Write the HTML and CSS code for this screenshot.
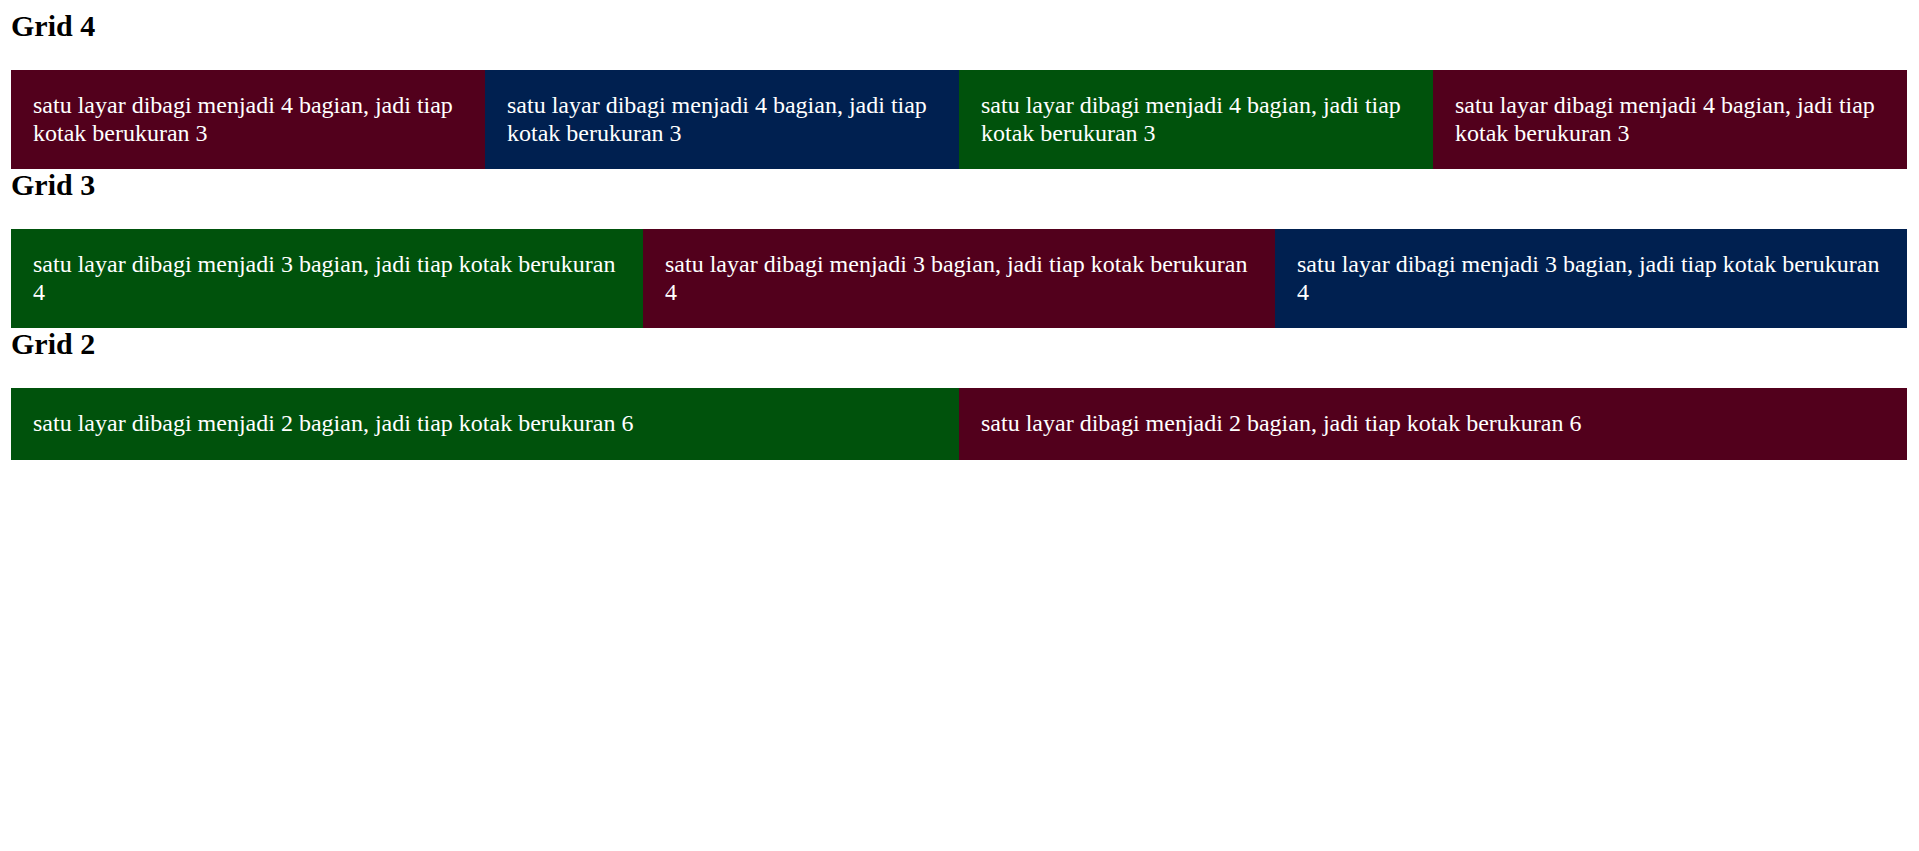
FILE: index.html
```html
<!DOCTYPE html>
<html>
<head>
<meta charset="utf-8">
<title>Grid</title>
<link rel="stylesheet" href="styles.css">
</head>
<body>
<h2 class="title">Grid 4</h2>
<div class="row row-4">
  <div class="cell maroon">satu layar dibagi menjadi 4 bagian, jadi tiap kotak berukuran 3</div>
  <div class="cell navy">satu layar dibagi menjadi 4 bagian, jadi tiap kotak berukuran 3</div>
  <div class="cell green">satu layar dibagi menjadi 4 bagian, jadi tiap kotak berukuran 3</div>
  <div class="cell maroon">satu layar dibagi menjadi 4 bagian, jadi tiap kotak berukuran 3</div>
</div>
<h2 class="title">Grid 3</h2>
<div class="row row-3">
  <div class="cell green">satu layar dibagi menjadi 3 bagian, jadi tiap kotak berukuran 4</div>
  <div class="cell maroon">satu layar dibagi menjadi 3 bagian, jadi tiap kotak berukuran 4</div>
  <div class="cell navy">satu layar dibagi menjadi 3 bagian, jadi tiap kotak berukuran 4</div>
</div>
<h2 class="title">Grid 2</h2>
<div class="row row-2">
  <div class="cell green">satu layar dibagi menjadi 2 bagian, jadi tiap kotak berukuran 6</div>
  <div class="cell maroon">satu layar dibagi menjadi 2 bagian, jadi tiap kotak berukuran 6</div>
</div>
</body>
</html>
```
FILE: styles.css
```css
html, body {
  background: #ffffff;
}
body {
  margin: 10px 12px 10px 11px;
  font-family: "Liberation Serif", "Times New Roman", serif;
  color: #000000;
}
.title {
  font-size: 30px;
  font-weight: bold;
  line-height: 31px;
  margin: 0 0 29px 0;
}
.row {
  display: grid;
}
.row-4 {
  grid-template-columns: repeat(4, 1fr);
}
.row-3 {
  grid-template-columns: repeat(3, 1fr);
}
.row-2 {
  grid-template-columns: repeat(2, 1fr);
}
.cell {
  padding: 22px;
  font-size: 24px;
  line-height: 27.5px;
  color: #ffffff;
}
.maroon {
  background: #52001c;
}
.navy {
  background: #002050;
}
.green {
  background: #00520c;
}
```
